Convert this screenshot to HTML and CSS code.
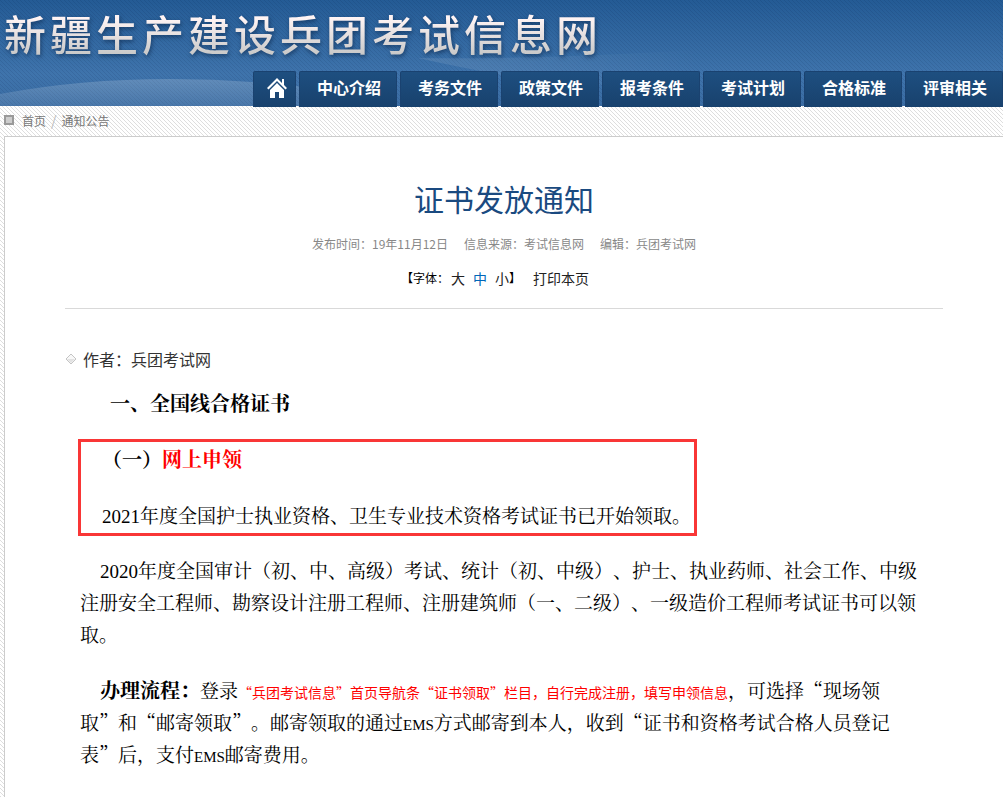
FILE: index.html
```html
<!DOCTYPE html>
<html lang="zh-CN">
<head>
<meta charset="utf-8">
<meta name="viewport" content="width=device-width, initial-scale=1">
<title>证书发放通知</title>
<link rel="stylesheet" href="styles.css">
</head>
<body>
<header class="header">
  <svg class="header-glow" viewBox="0 0 1003 106" preserveAspectRatio="none" aria-hidden="true">
    <defs>
      <linearGradient id="hill" x1="0" y1="0" x2="0" y2="1">
        <stop offset="0" stop-color="#fff" stop-opacity=".18"/>
        <stop offset="1" stop-color="#fff" stop-opacity=".08"/>
      </linearGradient>
      <linearGradient id="ray" x1="0" y1="0" x2="1" y2="0">
        <stop offset="0" stop-color="#fff" stop-opacity=".1"/>
        <stop offset="1" stop-color="#fff" stop-opacity="0"/>
      </linearGradient>
    </defs>
    <path d="M0 94Q80 79 170 79Q250 79 330 90V106H0Z" fill="url(#hill)"/>
    <path d="M418 58Q520 60 700 50V85H560Q480 72 418 58Z" fill="url(#ray)"/>
  </svg>
  <div class="site-name">新疆生产建设兵团考试信息网</div>
  <nav class="nav" aria-label="主导航">
    <a class="nav-home" href="#" aria-label="首页">
      <svg width="20" height="20" viewBox="0 0 20 20" aria-hidden="true">
        <path d="M10 0L0 10L1.500 11.500L10 3L18.500 11.500L20 10L17 7V1H15V5Z" fill="#fff"/>
        <path d="M10 5L3 12V20H8V14H12V20H17V12Z" fill="#fff"/>
      </svg>
    </a>
    <a href="#">中心介绍</a>
    <a href="#">考务文件</a>
    <a href="#">政策文件</a>
    <a href="#">报考条件</a>
    <a href="#">考试计划</a>
    <a href="#">合格标准</a>
    <a href="#">评审相关</a>
  </nav>
</header>
<nav class="crumbs" aria-label="当前位置">
  <span class="crumb-mark"></span>
  <a href="#">首页</a>
  <span class="slash">/</span>
  <a href="#">通知公告</a>
</nav>
<main class="panel">
  <header class="article-head">
    <h1>证书发放通知</h1>
    <p class="meta"><span>发布时间：19年11月12日</span><span>信息来源：考试信息网</span><span>编辑：兵团考试网</span></p>
    <p class="tools">
      <span class="tools-label">【字体：</span>
      <span class="sizes">
        <button type="button">大</button>
        <button type="button" class="current">中</button>
        <button type="button">小</button>
      </span>
      <span class="tools-label">】</span>
      <button type="button" class="print">打印本页</button>
    </p>
  </header>
  <p class="author">
    <svg width="12" height="12" viewBox="0 0 12 12" aria-hidden="true"><path d="M6 1L11 6L6 11L1 6Z" fill="#f8f8f8" stroke="#c4c4c4"/><path d="M2 6H10L6 10Z" fill="#e2e2e2"/></svg>
    作者：兵团考试网
  </p>
  <article class="content">
    <h2>一、全国线合格证书</h2>
    <section class="notice">
      <h3>（一）<span class="red">网上申领</span></h3>
      <p><span class="num">2021</span>年度全国护士执业资格、卫生专业技术资格考试证书已开始领取。</p>
    </section>
    <p class="para"><span class="num">2020</span>年度全国审计（初、中、高级）考试、统计（初、中级）、护士、执业药师、社会工作、中级注册安全工程师、勘察设计注册工程师、注册建筑师（一、二级）、一级造价工程师考试证书可以领取。</p>
    <p class="para"><strong>办理流程：</strong>登录<span class="hint">“兵团考试信息”首页导航条“证书领取”栏目，自行完成注册，填写申领信息</span>，可选择“现场领取”和“邮寄领取”。邮寄领取的通过<span class="latin">EMS</span>方式邮寄到本人，收到“证书和资格考试合格人员登记表”后，支付<span class="latin">EMS</span>邮寄费用。</p>
  </article>
</main>
</body>
</html>
```
FILE: styles.css
```css
* {
  box-sizing: border-box;
}

body {
  margin: 0;
  min-height: 100vh;
  display: flex;
  flex-direction: column;
  overflow-x: hidden;
  font-family: "Microsoft YaHei", "Noto Sans CJK SC", sans-serif;
  text-spacing-trim: space-all;
  background: #fff linear-gradient(45deg, transparent 45%, #dedede 45% 55%, transparent 55%) 0 0 / 4px 4px;
}

h1, h2, h3, p {
  margin: 0;
}

a {
  color: inherit;
  text-decoration: none;
}

.header {
  position: relative;
  display: flex;
  flex-direction: column;
  justify-content: space-between;
  height: 106px;
  background:
    linear-gradient(45deg, transparent 45%, rgba(0, 20, 60, 0.1) 45% 55%, transparent 55%) 0 0 / 4px 4px,
    linear-gradient(#245b95, #3f74ac 70%, #3a6ca3);
}

.header-glow {
  position: absolute;
  inset: 0;
  width: 100%;
  height: 100%;
}

.site-name {
  position: relative;
  padding: 5px 0 0 4px;
  font-size: 42px;
  font-weight: 500;
  line-height: 56px;
  letter-spacing: 4px;
  white-space: nowrap;
  background: linear-gradient(#fff4f4 30%, #c8c8c8 90%);
  background-clip: text;
  color: transparent;
  filter: drop-shadow(1px 2px 2px rgba(0, 20, 50, 0.5));
}

.nav {
  position: relative;
  display: flex;
  justify-content: flex-end;
  gap: 3px;
  margin-bottom: -1px;
}

.nav a {
  height: 36px;
  padding: 0 15px 0 17px;
  border: 1px solid #1a4270;
  border-bottom: 0;
  border-radius: 2px 2px 0 0;
  background: linear-gradient(#1e4f80, #18416d);
  color: #fff;
  font-size: 16px;
  font-weight: bold;
  line-height: 30px;
  white-space: nowrap;
}

.nav .nav-home {
  padding: 6px 8px 0 13px;
  line-height: 0;
}

.crumbs {
  display: flex;
  align-items: center;
  gap: 5px;
  height: 30px;
  padding: 0 0 2px 4px;
  font-size: 12px;
  color: #777;
}

.crumb-mark {
  width: 10px;
  height: 10px;
  margin-right: 3px;
  border: 2px solid #999;
  background: #ccc;
}

.slash {
  font-size: 14px;
  color: #bbb;
}

.panel {
  flex: 1;
  margin-left: 4px;
  padding: 0 60px;
  border: 1px solid #ccc;
  border-width: 1px 0 0 1px;
  background: #fff;
}

.article-head {
  padding: 37px 0 18px;
  border-bottom: 1px solid #d9d9d9;
  text-align: center;
}

h1 {
  color: #1a4a80;
  font-size: 30px;
  font-weight: normal;
  line-height: 48px;
}

.meta {
  display: flex;
  justify-content: center;
  gap: 16px;
  padding-top: 12px;
  color: #888;
  font-size: 12px;
  line-height: 20px;
}

.tools {
  display: flex;
  justify-content: center;
  align-items: center;
  padding-top: 12px;
  padding-right: 18px;
  line-height: 24px;
}

.tools-label {
  font-size: 12px;
}

.sizes {
  display: flex;
  gap: 8px;
  padding-left: 2px;
}

.tools button {
  padding: 0;
  border: 0;
  background: none;
  color: #222;
  font: 14px/24px "Microsoft YaHei", "Noto Sans CJK SC", sans-serif;
}

.tools .current {
  color: #0066b8;
}

.tools .print {
  margin-left: 12px;
}

.author {
  display: flex;
  align-items: center;
  gap: 6px;
  padding-top: 38px;
  color: #333;
  font-size: 16px;
  line-height: 24px;
}

.content {
  padding: 16px 25px 24px 15px;
  color: #000;
  font-family: SimSun, "Noto Serif CJK SC", "Noto Sans CJK SC", serif;
  font-size: 19px;
  line-height: 32px;
}

h2, h3 {
  font-size: 20px;
  font-weight: bold;
  line-height: 32px;
}

h2 {
  padding-left: 30px;
}

.notice {
  width: fit-content;
  margin: 20px 0 18px -2px;
  padding: 1px 3px 2px 21px;
  border: 3px solid #f93636;
}

.notice h3 {
  margin-bottom: 24px;
}

.red {
  color: #f00;
}

.para {
  margin-bottom: 24px;
  text-indent: 20px;
}

.para strong,
.num,
.latin,
.hint {
  line-height: 1;
}

.para strong {
  font-size: 20px;
}

.num {
  font-family: "Liberation Serif", serif;
}

.latin {
  font-family: "Liberation Serif", serif;
  font-size: 15px;
}

.hint {
  color: #f00;
  font-family: "Microsoft YaHei", "Noto Sans CJK SC", sans-serif;
  font-size: 14px;
}
```
